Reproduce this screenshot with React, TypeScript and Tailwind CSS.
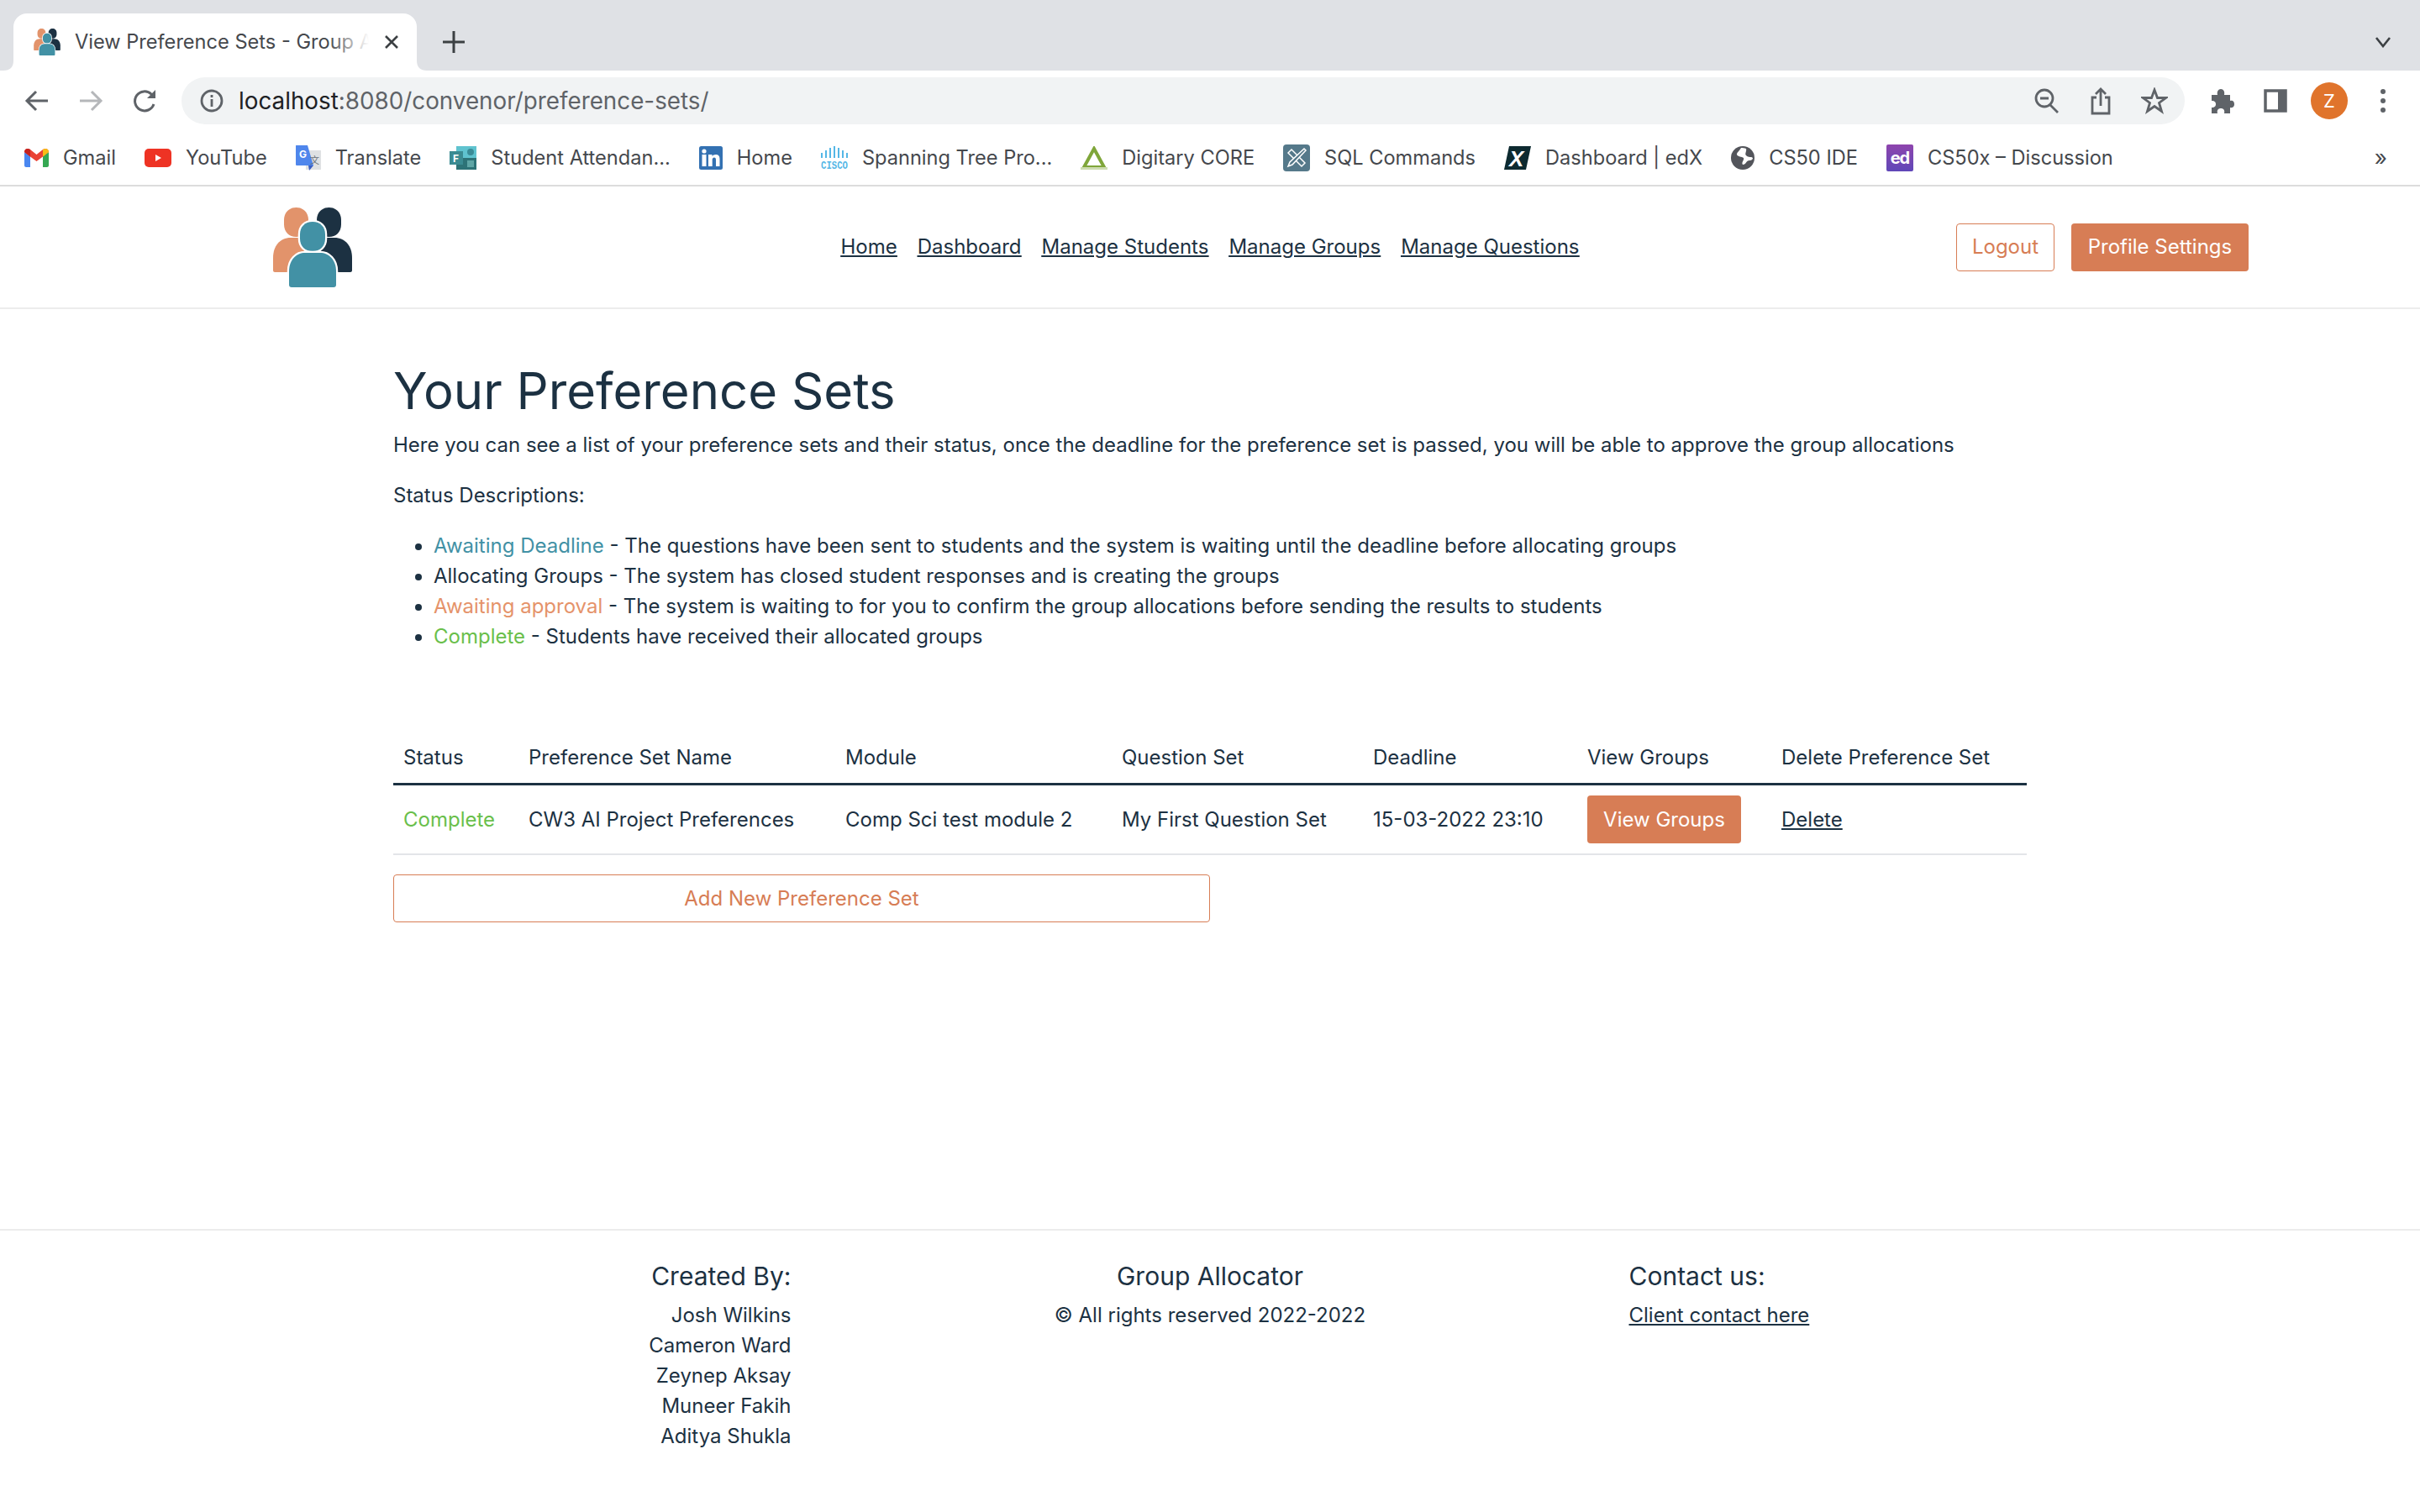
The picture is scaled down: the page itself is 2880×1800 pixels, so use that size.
import React from "react";

function Logo({ className }: { className: string }) {
  return (
    <svg viewBox="0 0 94 95" className={className}>
      <path d="M13 15C13 6 19 0 27.500 0S42 6 42 15V20C42 29 36 35 27.500 35S13 29 13 20Z" fill="#e2936b" />
      <path d="M0 75V60C0 46 8 36 21 36H36L40 77H2C1 77 0 76 0 75Z" fill="#e2936b" />
      <path d="M52 15C52 6 58 0 66.500 0S81 6 81 15V20C81 29 75 35 66.500 35S52 29 52 20Z" fill="#1c3142" />
      <path d="M94 75V60C94 46 86 36 73 36H58L54 77H92C93 77 94 76 94 75Z" fill="#1c3142" />
      <path d="M32 32C32 23 38 17 47 17S62 23 62 32V37C62 46 56 52 47 52S32 46 32 37Z" fill="#4291a5" stroke="#fff" strokeWidth="4.500" paintOrder="stroke" />
      <path d="M19 92V76C19 62 28 54 38 54H56C66 54 75 62 75 76V92C75 94 74 95 72 95H22C20 95 19 94 19 92Z" fill="#4291a5" stroke="#fff" strokeWidth="4.500" paintOrder="stroke" />
    </svg>
  );
}

const Gmail = () => (
  <svg viewBox="0 0 29 22" className="w-[29px] h-[22px]">
    <path d="M0 4V20C0 21 1 22 2 22H7V9Z" fill="#4a87f0" />
    <path d="M29 4V20C29 21 28 22 27 22H22V9Z" fill="#35a853" />
    <path d="M0 4C0 0 4 -1 7 1L14.500 7 22 1C25 -1 29 0 29 4L22 9.500 14.500 15 7 9.500Z" fill="#e94335" />
    <path d="M0 4C0 0 4 -1 7 1V9.500Z" fill="#c5221f" />
    <path d="M22 1C25 -1 29 0 29 4L22 9.500Z" fill="#f9bc15" />
  </svg>
);

const YouTube = () => (
  <svg viewBox="0 0 32 22" className="w-[32px] h-[22px]">
    <rect width="32" height="22" rx="5" fill="#ee3324" />
    <path d="M13 7V15L20 11Z" fill="#fff" />
  </svg>
);

const Translate = () => (
  <svg viewBox="0 0 30 30" className="w-[30px] h-[30px] overflow-visible">
    <rect x="12" y="6" width="18" height="23" fill="#dfe1e3" />
    <path d="M1 0H14L21 24H1C0 24 0 23 0 22V1C0 0 0 0 1 0Z" fill="#4f86ec" />
    <path d="M15 24H21L16 30Z" fill="#3a5fc4" />
    <text x="4" y="15" fontSize="12" fontWeight="700" fontFamily="Inter" fill="#fff">G</text>
    <text x="17" y="22" fontSize="11" fontFamily="Noto Sans CJK SC" fill="#6a7078">文</text>
  </svg>
);

const Teams = () => (
  <svg viewBox="0 0 32 28" className="w-[32px] h-[28px] overflow-visible">
    <rect x="8" y="0" width="24" height="14" fill="#5fc3cf" />
    <circle cx="25" cy="7" r="4" fill="#3a8c97" />
    <rect x="8" y="14" width="24" height="14" fill="#2d7377" />
    <rect x="21" y="17" width="8" height="8" fill="#5fa6a6" />
    <rect x="0" y="6" width="16" height="16" fill="#3a8b92" />
    <text x="4" y="19" fontSize="12" fontWeight="700" fontFamily="Inter" fill="#fff">F</text>
  </svg>
);

const LinkedIn = () => (
  <svg viewBox="0 0 28 28" className="w-[28px] h-[28px]">
    <rect width="28" height="28" rx="2.500" fill="#3371b2" />
    <circle cx="6" cy="6" r="2.600" fill="#fff" />
    <rect x="3.500" y="10" width="5" height="14" fill="#fff" />
    <path d="M11 10H15.500V12C17 9.500 24.500 8.500 24.500 15V24H20V16C20 12.500 15.700 12.800 15.700 16V24H11Z" fill="#fff" />
  </svg>
);

const Cisco = () => (
  <svg viewBox="0 0 32 28" className="w-[32px] h-[28px] overflow-visible">
    <g fill="#55b7e6">
      <rect x="0" y="8" width="2" height="6" />
      <rect x="5" y="5" width="2" height="9" />
      <rect x="10" y="2" width="2" height="12" />
      <rect x="15" y="0" width="2" height="14" />
      <rect x="20" y="2" width="2" height="12" />
      <rect x="25" y="5" width="2" height="9" />
      <rect x="30" y="8" width="2" height="6" />
    </g>
    <text x="0" y="27" fontSize="13" fontWeight="700" textLength="32" lengthAdjust="spacingAndGlyphs" fontFamily="Liberation Mono" fill="#55b7e6">CISCO</text>
  </svg>
);

const Digitary = () => (
  <svg viewBox="0 0 32 28" className="w-[32px] h-[28px]">
    <path d="M16 3L28 25H4Z" fill="none" stroke="#7fa63a" strokeWidth="4" />
    <rect x="0" y="25" width="32" height="3" fill="#cddcb0" />
  </svg>
);

const Sql = () => (
  <svg viewBox="0 0 32 32" className="w-[32px] h-[32px]">
    <rect width="32" height="32" rx="4" fill="#55798a" />
    <g fill="none" stroke="#fff" strokeWidth="1.500">
      <path d="M6 10L10 6L26 22L22 26Z" />
      <path d="M25 5L27 7L11 24L6 26L8 21Z" fill="#55798a" />
    </g>
  </svg>
);

const Edx = () => (
  <svg viewBox="0 0 32 28" className="w-[32px] h-[28px] overflow-visible">
    <path d="M6 0H32L26 28H0Z" fill="#0d2a30" />
    <text x="6" y="24" fontSize="26" fontWeight="800" fontStyle="italic" fontFamily="Liberation Sans" fill="#fff">X</text>
  </svg>
);

const Globe = () => (
  <svg viewBox="0 0 28 28" className="w-[28px] h-[28px]">
    <circle cx="14" cy="14" r="14" fill="#53555b" />
    <path d="M12 2C10 6 7 7 7 10C8 13 13 12 15 14C16 17 12 19 14 22C18 22 18 17 22 17C25 17 26 15 26 14C24 12 21 14 18 11C16 9 19 6 18 3C16 2 14 2 12 2Z" fill="#fff" />
  </svg>
);

const Ed = () => (
  <div className="w-[32px] h-[32px] rounded-[2px] bg-gradient-to-b from-[#8e44ad] to-[#5f47b8] flex items-center justify-center text-white text-[20px] leading-none font-bold font-['Inter'] tracking-[-1px]">
    ed
  </div>
);

const bookmarks: [React.ReactNode, string][] = [
  [<Gmail />, "Gmail"],
  [<YouTube />, "YouTube"],
  [<Translate />, "Translate"],
  [<Teams />, "Student Attendan..."],
  [<LinkedIn />, "Home"],
  [<Cisco />, "Spanning Tree Pro..."],
  [<Digitary />, "Digitary CORE"],
  [<Sql />, "SQL Commands"],
  [<Edx />, "Dashboard | edX"],
  [<Globe />, "CS50 IDE"],
  [<Ed />, "CS50x – Discussion"],
];

const iconClass = "w-[32px] h-[32px]";
const uiStroke = "#5f6368";

function ToolIcon({ children }: { children: React.ReactNode }) {
  return (
    <svg viewBox="0 0 32 32" className={iconClass} fill="none" stroke={uiStroke} strokeWidth="3">
      {children}
    </svg>
  );
}

function ChromeBar() {
  return (
    <div className="font-['Inter'] shrink-0">
      <div className="h-[84px] bg-[#dfe1e5] flex items-end pl-[16px] pr-[34px]">
        <div className="relative w-[480px] h-[68px] bg-white rounded-t-[16px] flex items-center pl-[24px] pr-[24px] gap-[17px]">
          <svg viewBox="0 0 12 12" className="absolute left-[-12px] bottom-0 w-[12px] h-[12px]">
            <path d="M12 0V12H0C8 12 12 8 12 0Z" fill="#fff" />
          </svg>
          <svg viewBox="0 0 12 12" className="absolute right-[-12px] bottom-0 w-[12px] h-[12px]">
            <path d="M0 0V12H12C4 12 0 8 0 0Z" fill="#fff" />
          </svg>
          <Logo className="w-[32px] h-[32px] shrink-0" />
          <div className="relative w-[350px] overflow-hidden whitespace-nowrap text-[23.6px] leading-[32px] text-[#45484d] shrink-0">
            View Preference Sets - Group Allocator
            <div className="absolute right-0 top-0 w-[48px] h-full bg-gradient-to-r from-transparent to-white" />
          </div>
          <svg viewBox="0 0 20 20" className="w-[20px] h-[20px] shrink-0" stroke="#3c4043" strokeWidth="2.600">
            <path d="M3 3L17 17M17 3L3 17" />
          </svg>
        </div>
        <div className="h-[68px] flex items-center ml-[30px]">
          <svg viewBox="0 0 28 28" className="w-[28px] h-[28px]" stroke="#3c4043" strokeWidth="3">
            <path d="M14 1V27M1 14H27" />
          </svg>
        </div>
        <div className="flex-1 h-[68px] flex items-center justify-end">
          <svg viewBox="0 0 20 14" className="w-[20px] h-[14px]" fill="none" stroke="#3c4043" strokeWidth="2.600">
            <path d="M2 2L10 12L18 2" />
          </svg>
        </div>
      </div>

      <div className="h-[72px] bg-white flex items-center pl-[28px] pr-[28px]">
        <ToolIcon>
          <path d="M29 16H5M15 5L4 16L15 27" />
        </ToolIcon>
        <div className="w-[32px] ml-[32px]">
          <svg viewBox="0 0 32 32" className={iconClass} fill="none" stroke="#b5b7ba" strokeWidth="3">
            <path d="M3 16H27M17 5L28 16L17 27" />
          </svg>
        </div>
        <div className="ml-[33px]">
          <ToolIcon>
            <path d="M26 20A11.500 11.500 0 1 1 23 8L27 12" />
            <path d="M28 3V13H18Z" fill={uiStroke} stroke="none" />
          </ToolIcon>
        </div>
        <div className="ml-[27px] w-[2384px] h-[56px] rounded-full bg-[#f1f3f4] flex items-center pl-[21px] pr-[20px] shrink-0">
          <svg viewBox="0 0 30 30" className="w-[30px] h-[30px] shrink-0" fill="none" stroke={uiStroke} strokeWidth="2.800">
            <circle cx="15" cy="15" r="12" />
            <path d="M15 13V22M15 8V11" />
          </svg>
          <div className="ml-[17px] text-[27.800px] leading-[36px] whitespace-nowrap text-[#5f6368]">
            <span className="text-[#202124]">localhost</span>:8080/convenor/preference-sets/
          </div>
          <div className="flex-1" />
          <svg viewBox="0 0 30 32" className="w-[30px] h-[32px]" fill="none" stroke={uiStroke} strokeWidth="2.800">
            <circle cx="12" cy="13" r="10" />
            <path d="M7 13H17M19 21L28 30" />
          </svg>
          <div className="ml-[36px]">
            <svg viewBox="0 0 26 34" className="w-[26px] h-[34px]" fill="none" stroke={uiStroke} strokeWidth="2.800">
              <path d="M8 13H3V32H23V13H18M13 23V3M7 9L13 3L19 9" />
            </svg>
          </div>
          <div className="ml-[35px]">
            <svg viewBox="0 0 32 32" className="w-[32px] h-[32px]" fill="none" stroke={uiStroke} strokeWidth="2.800">
              <path d="M16 3L19.500 12.500H29.500L21.500 18.500L24.500 28.500L16 22.500L7.500 28.500L10.500 18.500L2.500 12.500H12.500Z" />
            </svg>
          </div>
        </div>
        <div className="ml-[29px]">
          <svg viewBox="0 0 30 30" className="w-[30px] h-[30px]" fill={uiStroke}>
            <path d="M3 8H10C9 4 11 1 14 1S19 4 18 8H25V15C29 14 30 17 30 19S29 24 25 23V30H18C19 26 17 24 14 24S9 26 10 30H3V23C7 23 8 21 8 19S7 15 3 15Z" />
          </svg>
        </div>
        <div className="ml-[35px]">
          <svg viewBox="0 0 28 28" className="w-[28px] h-[28px]" fill="none" stroke={uiStroke}>
            <rect x="2" y="2" width="24" height="24" strokeWidth="3.500" />
            <rect x="17" y="2" width="9" height="24" fill={uiStroke} stroke="none" />
          </svg>
        </div>
        <div className="ml-[28px] w-[44px] h-[44px] rounded-full bg-[#e0742c] text-white text-[22px] flex items-center justify-center">
          Z
        </div>
        <div className="ml-[39px] flex flex-col gap-[5px] w-[6px]">
          <span className="w-[6px] h-[6px] rounded-full bg-[#5f6368]" />
          <span className="w-[6px] h-[6px] rounded-full bg-[#5f6368]" />
          <span className="w-[6px] h-[6px] rounded-full bg-[#5f6368]" />
        </div>
      </div>

      <div className="h-[66px] bg-white border-b-2 border-[#dcdcdc] flex items-center pl-[29px] pr-[39px] text-[23.600px] leading-[32px] text-[#45484d]">
        {bookmarks.map(([icon, label]) => (
          <div key={label} className="flex items-center gap-[17px] mr-[34px] whitespace-nowrap">
            <div className="flex items-center justify-center">{icon}</div>
            <span>{label}</span>
          </div>
        ))}
        <div className="flex-1" />
        <span className="text-[26px]">»</span>
      </div>
    </div>
  );
}

const columns = [
  { label: "Status", w: "w-[149px]" },
  { label: "Preference Set Name", w: "w-[377px]" },
  { label: "Module", w: "w-[329px]" },
  { label: "Question Set", w: "w-[299px]" },
  { label: "Deadline", w: "w-[255px]" },
  { label: "View Groups", w: "w-[231px]" },
  { label: "Delete Preference Set", w: "w-[304px]" },
];

export default function App() {
  return (
    <div className="h-screen flex flex-col bg-white overflow-hidden font-['Inter',sans-serif] text-[24px] leading-[36px] text-[#1c3142]">
      <ChromeBar />

      <header className="h-[146px] shrink-0 border-b-2 border-[#ececec] grid grid-cols-[1fr_auto_1fr] items-center">
        <div className="pl-[325px]">
          <Logo className="w-[94px] h-[95px]" />
        </div>
        <nav className="flex gap-[24px] underline whitespace-nowrap">
          <a>Home</a>
          <a>Dashboard</a>
          <a>Manage Students</a>
          <a>Manage Groups</a>
          <a>Manage Questions</a>
        </nav>
        <div className="flex justify-end gap-[20px] pr-[204px]">
          <button className="h-[57px] w-[117px] rounded-[4px] border border-[#d77d55] text-[#d77d55]">Logout</button>
          <button className="h-[57px] w-[211px] rounded-[4px] bg-[#d77d55] text-white">Profile Settings</button>
        </div>
      </header>

      <main className="flex-1 px-[468px] pt-[61px]">
        <h1 className="text-[59.800px] leading-[72px] font-normal mb-[11px]">Your Preference Sets</h1>
        <p className="mb-[24px] whitespace-nowrap">
          Here you can see a list of your preference sets and their status, once the deadline for the preference set is passed, you will be able to approve the group allocations
        </p>
        <p className="mb-[24px]">Status Descriptions:</p>
        <ul className="list-disc pl-[48px] mb-[95px]">
          <li><span className="text-[#4291a5]">Awaiting Deadline</span> - The questions have been sent to students and the system is waiting until the deadline before allocating groups</li>
          <li>Allocating Groups - The system has closed student responses and is creating the groups</li>
          <li><span className="text-[#e5936a]">Awaiting approval</span> - The system is waiting to for you to confirm the group allocations before sending the results to students</li>
          <li><span className="text-[#6abf4b]">Complete</span> - Students have received their allocated groups</li>
        </ul>

        <table className="w-[1944px] table-fixed border-collapse">
          <thead>
            <tr className="border-b-[3px] border-[#1c3142]">
              {columns.map((c) => (
                <th key={c.label} className={`${c.w} px-[12px] pt-[13px] pb-[12px] text-left font-normal whitespace-nowrap`}>{c.label}</th>
              ))}
            </tr>
          </thead>
          <tbody>
            <tr className="border-b-2 border-[#e3e5e9]">
              <td className="px-[12px] py-[12px] text-[#6abf4b]">Complete</td>
              <td className="px-[12px] py-[12px] whitespace-nowrap">CW3 AI Project Preferences</td>
              <td className="px-[12px] py-[12px] whitespace-nowrap">Comp Sci test module 2</td>
              <td className="px-[12px] py-[12px] whitespace-nowrap">My First Question Set</td>
              <td className="px-[12px] py-[12px] whitespace-nowrap">15-03-2022 23:10</td>
              <td className="px-[12px] py-[12px]">
                <button className="block h-[57px] w-[183px] rounded-[4px] bg-[#d77d55] text-white">View Groups</button>
              </td>
              <td className="px-[12px] py-[12px] underline">Delete</td>
            </tr>
          </tbody>
        </table>

        <button className="mt-[23px] block w-[972px] h-[57px] rounded-[4px] border border-[#d77d55] text-[#d77d55]">Add New Preference Set</button>
      </main>

      <footer className="h-[337px] shrink-0 border-t-2 border-[#ececec] flex pt-[36px]">
        <div className="flex-1 text-right">
          <h5 className="text-[30px] leading-[36px] mb-[11px]">Created By:</h5>
          <div>Josh Wilkins</div>
          <div>Cameron Ward</div>
          <div>Zeynep Aksay</div>
          <div>Muneer Fakih</div>
          <div>Aditya Shukla</div>
        </div>
        <div className="w-[997px] text-center">
          <h5 className="text-[30px] leading-[36px] mb-[11px]">Group Allocator</h5>
          <div>© All rights reserved 2022-2022</div>
        </div>
        <div className="flex-1">
          <h5 className="text-[30px] leading-[36px] mb-[11px]">Contact us:</h5>
          <a className="underline">Client contact here</a>
        </div>
      </footer>
    </div>
  );
}
